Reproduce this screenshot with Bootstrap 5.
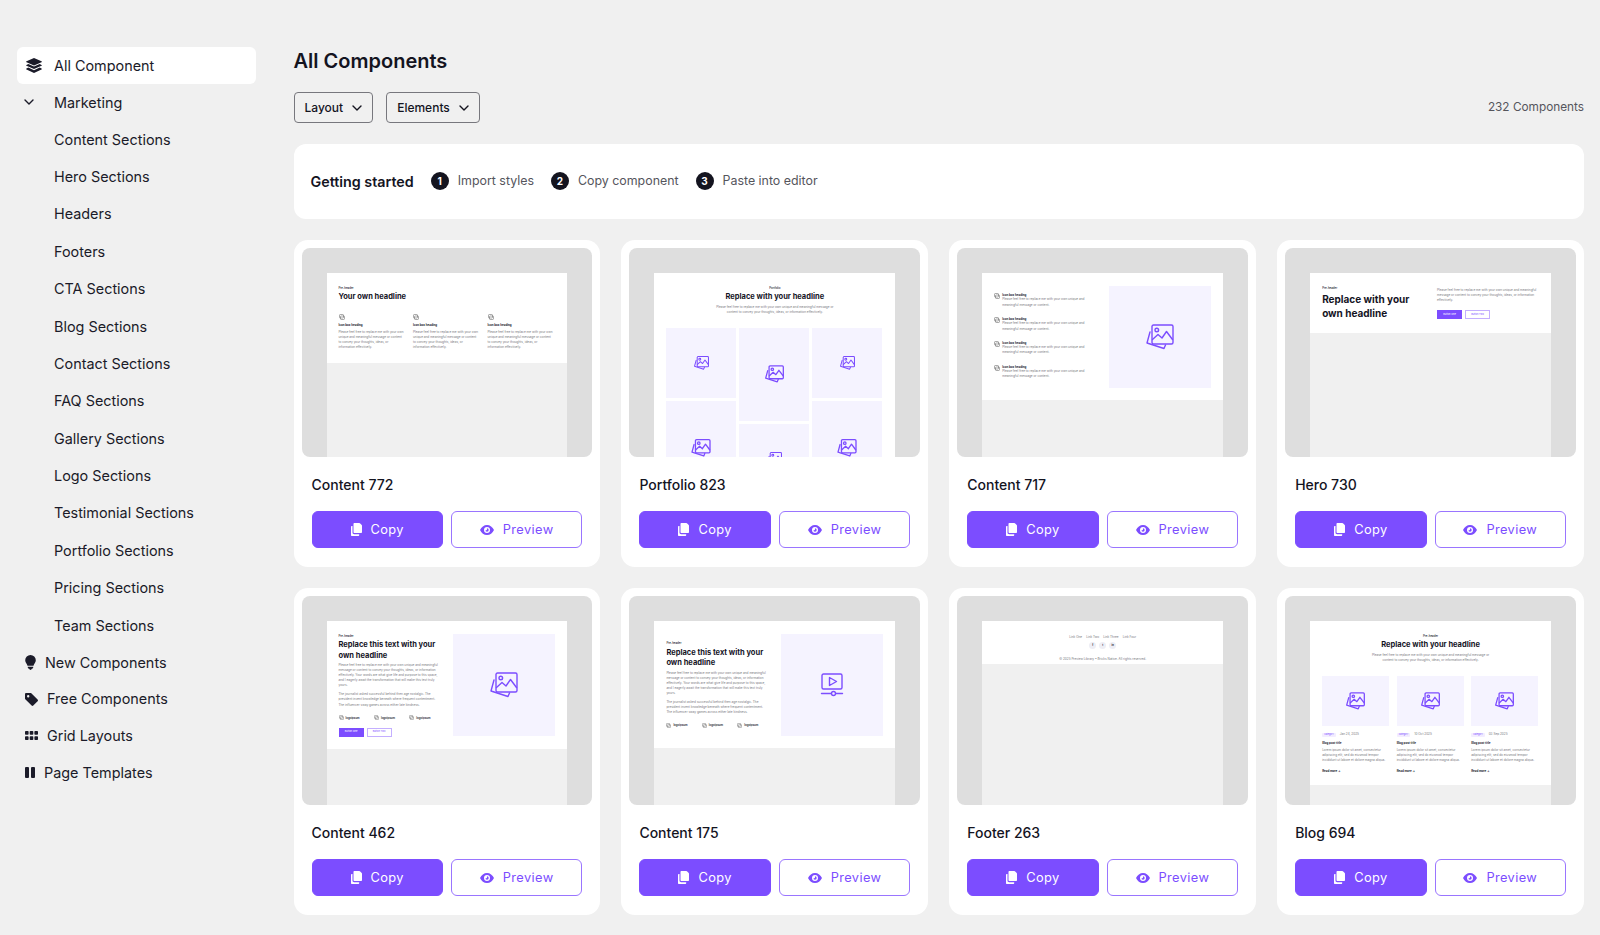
<!DOCTYPE html>
<html lang="en">
<head>
    <meta charset="UTF-8">
    <meta name="viewport" content="width=device-width, initial-scale=1.0">
    <title>All Components</title>
    <link href="https://cdn.jsdelivr.net/npm/bootstrap@5.3.0/dist/css/bootstrap.min.css" rel="stylesheet">
    <style>
        body {
            font-family: Inter, "Liberation Sans", sans-serif;
            background-color: #f0f0f0;
            color: #14141f;
        }

        /* sidebar */
        .side-col { width: 293.5px; flex: none; padding: 47px 37.500px 0 17px; }
        .side-link { display: flex; align-items: center; height: 36.7px; font-size: 14.4px; font-weight: 400; color: #1b1b29; padding: .6px 0 0 8px; }
        .side-link:hover { color: #1b1b29; }
        .side-link.active { background: #fff; color: #1b1b29; border-radius: 6px; padding-left: 9px; gap: 12px; }
        .side-link svg { fill: currentColor; flex: none; }
        .side-sub { height: 37.4px; padding-left: 37px; }
        .side-icon { gap: 9px; }
        .side-caret { width: 30px; margin-left: -1px; }

        /* top of main column */
        .main-col { flex: 1; min-width: 0; padding: 48px 16px 20px 0; }
        .page-title { font-size: 20px; line-height: 26px; font-weight: 600; margin: 0 0 18px; }
        .filter-row { gap: 13px; }
        .filter-btn { height: 31px; border: 1px solid #77777d; border-radius: 4px; font-size: 12px; font-weight: 500; color: #14141f; padding: 0 10px; display: flex; align-items: center; gap: 9px; background: transparent; }
        .count-text { font-size: 11.8px; color: #55555c; }
        .start-bar { height: 75px; background: #fff; border-radius: 12px; padding: 0 17px; margin: 21px 0; display: flex; align-items: center; }
        .start-title { font-size: 14.3px; font-weight: 600; margin-right: 17px; }
        .start-step { display: flex; align-items: center; gap: 9px; margin-right: 17px; font-size: 12.4px; color: #55555c; }
        .step-num { width: 18px; height: 18px; border-radius: 50%; background: #14141f; color: #fff; font-size: 10px; font-weight: 700; display: flex; align-items: center; justify-content: center; }

        /* component cards */
        .comp-row { --bs-gutter-x: 21px; --bs-gutter-y: 21px; }
        .comp-card { background: #fff; border-radius: 14px; padding: 8px; height: 327px; }
        .comp-shot { height: 209px; background: #dedede; border-radius: 8px; padding: 25px 25px 0; overflow: hidden; }
        .comp-back { height: 184px; background: #f0f0f0; overflow: hidden; }
        .comp-name { font-size: 14px; font-weight: 500; line-height: 20px; margin: 18px 0 16.3px 10px; }
        .comp-actions { display: flex; gap: 8px; padding: 0 10px; }
        .btn-copy, .btn-view { flex: 1; height: 37px; border-radius: 6px; font-size: 12.8px; letter-spacing: .4px; display: flex; align-items: center; justify-content: center; gap: 9px; padding: 0; }
        .btn-copy { background: #7c4dff; border: 1px solid #7c4dff; color: #fff; }
        .btn-view { background: #fff; border: 1px solid #9a75ff; color: #7c4dff; }

        /* miniature page inside each screenshot */
        .mini-page { background: #fff; padding: 12.5px 12px; color: #14141f; }
        .mini-split { display: flex; justify-content: space-between; }
        .mini-pre { font-size: 2.8px; line-height: 4px; font-weight: 500; }
        .mini-head { font-size: 7.5px; line-height: 10.4px; font-weight: 700; margin-top: 2.8px; }
        .mini-big { font-size: 10px; line-height: 14.3px; margin-top: 2px; }
        .mini-text { font-size: 3.1px; line-height: 5.1px; color: #77777d; }
        .mini-bold { font-size: 2.9px; line-height: 4px; font-weight: 700; }
        .mini-sub { width: 122px; margin: 2.5px auto 0; }
        .mini-box { background: #f5f3ff; display: flex; align-items: center; justify-content: center; flex: none; }
        .mini-square { width: 102px; height: 102px; }
        .mini-col { width: 102px; }
        .mini-btns { display: flex; gap: 3px; }
        .mini-btn { height: 9px; width: 25px; border: .5px solid #7c4dff; font-size: 2.4px; display: flex; align-items: center; justify-content: center; }
        .mini-btn-on { background: #7c4dff; color: #fff; }
        .mini-btn-off { color: #7c4dff; border-color: #c4afff; }
        .mini-logos { display: flex; justify-content: space-between; padding-right: 10px; margin: 7.6px 0 7.3px; }
        .mini-logo { font-size: 2.8px; line-height: 4px; font-weight: 600; display: flex; align-items: center; gap: 2px; }
        .pic-icon { fill: none; stroke: #7c4dff; stroke-width: 1.4; stroke-linejoin: round; stroke-linecap: round; }
        .pic-sm { stroke-width: 1.9; }
        .tiny-icon { fill: none; stroke: #555; stroke-width: .5; flex-shrink: 0; display: block; }

        /* content 772 */
        .feat-cols { display: flex; gap: 9.5px; margin-top: 11.2px; }
        .feat-col { width: 65px; }
        .feat-title { margin: 3.5px 0 2.7px; }

        /* portfolio 823 */
        .folio-cols { display: flex; gap: 3.5px; margin-top: 12.3px; }
        .folio-col { display: flex; flex-direction: column; gap: 3.5px; width: 69.5px; }
        .folio-short { height: 70px; }
        .folio-tall { height: 93px; }

        /* content 717 */
        .list-col { display: flex; flex-direction: column; justify-content: center; gap: 9.8px; width: 100px; }
        .list-item { display: flex; gap: 2px; }
        .list-item .mini-text { width: 88px; }

        /* hero 730 */
        .hero-page { height: 60px; }
        .hero-copy { margin-top: 2.5px; }
        .hero-btns { margin-top: 6.7px; }

        /* content 462 / 175 */
        .body-one { margin-top: 2px; width: 100px; }
        .body-two { margin-top: 3.8px; width: 100px; }
        .logos-end { margin-bottom: 0; }

        /* footer 263 */
        .foot-page { height: 43px; text-align: center; }
        .foot-links { display: flex; justify-content: center; gap: 4px; line-height: 6px; }
        .foot-dots { display: flex; justify-content: center; gap: 3px; margin-top: 2.7px; }
        .foot-dot { width: 7px; height: 7px; border-radius: 50%; background: #eeeef5; font-size: 2.6px; font-weight: 700; display: flex; align-items: center; justify-content: center; }
        .foot-copy { margin-top: 8px; }

        /* blog 694 */
        .blog-cols { display: flex; gap: 7.5px; margin-top: 12.6px; text-align: left; }
        .blog-col { width: 67px; }
        .blog-img { height: 50px; }
        .blog-meta { display: flex; align-items: center; gap: 4px; margin-top: 6.2px; }
        .blog-badge { background: #f3edff; color: #7c4dff; font-size: 2.2px; padding: 0 2px; line-height: 4px; border-radius: 1px; }
        .blog-title { margin: 4.1px 0 2.8px; }
        .blog-more { margin-top: 5.5px; }
    </style>
</head>
<body>
    <svg width="0" height="0" class="position-absolute">
        <symbol id="i-caret" viewBox="0 0 10 6"><path d="M1 1l4 4 4-4" fill="none" stroke="currentColor" stroke-width="1.4" stroke-linecap="round" stroke-linejoin="round"/></symbol>
        <symbol id="i-copy" viewBox="0 0 11 13"><path d="M3.500 0h4.700c.5 0 .8.2 1 .5l1.300 1.300c.3.300.5.600.5 1V9c0 .6-.4 1-1 1H3.500c-.6 0-1-.4-1-1V1c0-.6.4-1 1-1z" fill="currentColor"/><path d="M1 3h.5v6.500c0 1 .7 1.700 1.700 1.700h5V12c0 .6-.4 1-1 1H1c-.6 0-1-.4-1-1V4c0-.6.4-1 1-1z" fill="currentColor"/></symbol>
        <symbol id="i-eye" viewBox="0 0 14 10"><path fill-rule="evenodd" d="M7 0c3 0 5.600 2 7 5-1.400 3-4 5-7 5S1.400 8 0 5c1.400-3 4-5 7-5zm0 2a3 3 0 1 0 0 6 3 3 0 0 0 0-6zm0 1.300a1.700 1.700 0 1 1-1.700 1.700c0 .3.200.5.500.5.700 0 1.200-.5 1.200-1.200 0-.4-.100-.7 0-1z" fill="currentColor"/></symbol>
        <symbol id="i-pics" viewBox="0 0 28 26"><rect x="6" y="1" width="21" height="19" rx="1.500"/><circle cx="10.800" cy="6" r="1.800"/><path d="M6.500 15.500l5.500-5 4 3.500 4.500-6.500 6 8"/><path d="M4 8L1 19l17 5.500 1.500-3.500"/></symbol>
        <symbol id="i-video" viewBox="0 0 24 24"><rect x="2" y="1" width="20" height="15" rx="1.500"/><path d="M9.500 4.500v8l7-4z"/><path d="M1.500 20.500h9.800M15.700 20.500h6.800"/><circle cx="13.500" cy="20.500" r="2"/></symbol>
        <symbol id="i-tiny" viewBox="0 0 6 6"><rect x=".5" y=".5" width="4" height="3.500" rx=".8"/><rect x="1.500" y="2" width="4" height="3.500" rx=".8"/></symbol>
    </svg>

    <div class="d-flex">
        <div class="side-col">
            <nav class="nav flex-column">
                <a class="nav-link side-link active" href="#">
                    <svg width="16" height="15" viewBox="0 0 16 15"><path d="M8 0l7.500 3.300c.5.200.5.700 0 .9L8 7.500.5 4.200c-.5-.2-.5-.7 0-.9z"/><path d="M2.300 6L.5 6.900c-.5.200-.5.700 0 .9L8 11.100l7.500-3.300c.5-.2.500-.7 0-.9L13.700 6 8 8.600z"/><path d="M2.300 9.600l-1.800.9c-.5.200-.5.700 0 .9L8 15l7.500-3.600c.5-.2.500-.7 0-.9l-1.800-.9L8 12.200z"/></svg>
                    All Component
                </a>
                <a class="nav-link side-link" href="#">
                    <span class="side-caret d-flex"><svg width="10" height="6"><use href="#i-caret"/></svg></span>
                    Marketing
                </a>
                <a class="nav-link side-link side-sub" href="#">Content Sections</a>
                <a class="nav-link side-link side-sub" href="#">Hero Sections</a>
                <a class="nav-link side-link side-sub" href="#">Headers</a>
                <a class="nav-link side-link side-sub" href="#">Footers</a>
                <a class="nav-link side-link side-sub" href="#">CTA Sections</a>
                <a class="nav-link side-link side-sub" href="#">Blog Sections</a>
                <a class="nav-link side-link side-sub" href="#">Contact Sections</a>
                <a class="nav-link side-link side-sub" href="#">FAQ Sections</a>
                <a class="nav-link side-link side-sub" href="#">Gallery Sections</a>
                <a class="nav-link side-link side-sub" href="#">Logo Sections</a>
                <a class="nav-link side-link side-sub" href="#">Testimonial Sections</a>
                <a class="nav-link side-link side-sub" href="#">Portfolio Sections</a>
                <a class="nav-link side-link side-sub" href="#">Pricing Sections</a>
                <a class="nav-link side-link side-sub" href="#">Team Sections</a>
                <a class="nav-link side-link side-icon" href="#">
                    <svg width="11" height="15" viewBox="0 0 11 15"><path d="M5.500 0a5.300 5.300 0 0 1 5.300 5.300c0 2.300-1.700 3.300-2.300 5.500h-6C1.900 8.600.2 7.600.2 5.300A5.300 5.300 0 0 1 5.500 0z"/><path d="M2.800 11.700h5.400v.9c0 .4-.2.7-.6.8l-.8.300c-.2.700-.7 1.200-1.300 1.200s-1.100-.5-1.300-1.200l-.8-.3c-.4-.1-.6-.4-.6-.8z"/></svg>
                    New Components
                </a>
                <a class="nav-link side-link side-icon" href="#">
                    <svg width="13" height="13" viewBox="0 0 13 13"><path fill-rule="evenodd" d="M0 1.200C0 .5.500 0 1.200 0h4.300c.3 0 .6.100.8.300l6.300 6.300c.5.500.5 1.200 0 1.700l-4.300 4.300c-.5.500-1.200.5-1.700 0L.3 6.300C.1 6.100 0 5.800 0 5.500zM3.200 4.400a1.200 1.200 0 1 0 0-2.400 1.200 1.200 0 0 0 0 2.400z"/></svg>
                    Free Components
                </a>
                <a class="nav-link side-link side-icon" href="#">
                    <svg width="13" height="9" viewBox="0 0 13 9"><rect width="3.600" height="3.800" rx=".8"/><rect x="4.700" width="3.600" height="3.800" rx=".8"/><rect x="9.400" width="3.600" height="3.800" rx=".8"/><rect y="5.200" width="3.600" height="3.800" rx=".8"/><rect x="4.700" y="5.200" width="3.600" height="3.800" rx=".8"/><rect x="9.400" y="5.200" width="3.600" height="3.800" rx=".8"/></svg>
                    Grid Layouts
                </a>
                <a class="nav-link side-link side-icon" href="#">
                    <svg width="10" height="11" viewBox="0 0 10 11"><rect width="4" height="11" rx="1"/><rect x="6" width="4" height="11" rx="1"/></svg>
                    Page Templates
                </a>
            </nav>
        </div>

        <main class="main-col">
            <h1 class="page-title">All Components</h1>
            <div class="d-flex align-items-center filter-row">
                <button class="btn filter-btn" type="button">Layout <svg width="10" height="6"><use href="#i-caret"/></svg></button>
                <button class="btn filter-btn" type="button">Elements <svg width="10" height="6"><use href="#i-caret"/></svg></button>
                <span class="count-text ms-auto">232 Components</span>
            </div>

            <div class="start-bar">
                <span class="start-title">Getting started</span>
                <span class="start-step"><span class="step-num">1</span>Import styles</span>
                <span class="start-step"><span class="step-num">2</span>Copy component</span>
                <span class="start-step"><span class="step-num">3</span>Paste into editor</span>
            </div>

            <div class="row row-cols-4 comp-row">
                <!-- Content 772 -->
                <div class="col">
                    <div class="comp-card">
                        <div class="comp-shot"><div class="comp-back">
                            <div class="mini-page">
                                <div class="mini-pre">Pre-header</div>
                                <div class="mini-head">Your own headline</div>
                                <div class="feat-cols">
                                    <div class="feat-col"><svg class="tiny-icon" width="6" height="6"><use href="#i-tiny"/></svg><div class="mini-bold feat-title">Icon box heading</div><div class="mini-text">Please feel free to replace me with your own unique and meaningful message or content to convey your thoughts, ideas, or information effectively.</div></div>
                                    <div class="feat-col"><svg class="tiny-icon" width="6" height="6"><use href="#i-tiny"/></svg><div class="mini-bold feat-title">Icon box heading</div><div class="mini-text">Please feel free to replace me with your own unique and meaningful message or content to convey your thoughts, ideas, or information effectively.</div></div>
                                    <div class="feat-col"><svg class="tiny-icon" width="6" height="6"><use href="#i-tiny"/></svg><div class="mini-bold feat-title">Icon box heading</div><div class="mini-text">Please feel free to replace me with your own unique and meaningful message or content to convey your thoughts, ideas, or information effectively.</div></div>
                                </div>
                            </div>
                        </div></div>
                        <div class="comp-name">Content 772</div>
                        <div class="comp-actions">
                            <button class="btn btn-copy" type="button"><svg width="11" height="13"><use href="#i-copy"/></svg>Copy</button>
                            <button class="btn btn-view" type="button"><svg width="14" height="10"><use href="#i-eye"/></svg>Preview</button>
                        </div>
                    </div>
                </div>

                <!-- Portfolio 823 -->
                <div class="col">
                    <div class="comp-card">
                        <div class="comp-shot"><div class="comp-back">
                            <div class="mini-page text-center">
                                <div class="mini-pre">Portfolio</div>
                                <div class="mini-head">Replace with your headline</div>
                                <div class="mini-text mini-sub">Please feel free to replace me with your own unique and meaningful message or content to convey your thoughts, ideas, or information effectively.</div>
                                <div class="folio-cols">
                                    <div class="folio-col">
                                        <div class="mini-box folio-short"><svg class="pic-icon pic-sm" width="15" height="14"><use href="#i-pics"/></svg></div>
                                        <div class="mini-box folio-tall"><svg class="pic-icon pic-sm" width="20" height="18"><use href="#i-pics"/></svg></div>
                                    </div>
                                    <div class="folio-col">
                                        <div class="mini-box folio-tall"><svg class="pic-icon pic-sm" width="19" height="18"><use href="#i-pics"/></svg></div>
                                        <div class="mini-box folio-short"><svg class="pic-icon pic-sm" width="15" height="14"><use href="#i-pics"/></svg></div>
                                    </div>
                                    <div class="folio-col">
                                        <div class="mini-box folio-short"><svg class="pic-icon pic-sm" width="15" height="14"><use href="#i-pics"/></svg></div>
                                        <div class="mini-box folio-tall"><svg class="pic-icon pic-sm" width="20" height="18"><use href="#i-pics"/></svg></div>
                                    </div>
                                </div>
                            </div>
                        </div></div>
                        <div class="comp-name">Portfolio 823</div>
                        <div class="comp-actions">
                            <button class="btn btn-copy" type="button"><svg width="11" height="13"><use href="#i-copy"/></svg>Copy</button>
                            <button class="btn btn-view" type="button"><svg width="14" height="10"><use href="#i-eye"/></svg>Preview</button>
                        </div>
                    </div>
                </div>

                <!-- Content 717 -->
                <div class="col">
                    <div class="comp-card">
                        <div class="comp-shot"><div class="comp-back">
                            <div class="mini-page mini-split">
                                <div class="list-col">
                                    <div class="list-item"><svg class="tiny-icon" width="6" height="6"><use href="#i-tiny"/></svg><div><div class="mini-bold">Icon box heading</div><div class="mini-text">Please feel free to replace me with your own unique and meaningful message or content.</div></div></div>
                                    <div class="list-item"><svg class="tiny-icon" width="6" height="6"><use href="#i-tiny"/></svg><div><div class="mini-bold">Icon box heading</div><div class="mini-text">Please feel free to replace me with your own unique and meaningful message or content.</div></div></div>
                                    <div class="list-item"><svg class="tiny-icon" width="6" height="6"><use href="#i-tiny"/></svg><div><div class="mini-bold">Icon box heading</div><div class="mini-text">Please feel free to replace me with your own unique and meaningful message or content.</div></div></div>
                                    <div class="list-item"><svg class="tiny-icon" width="6" height="6"><use href="#i-tiny"/></svg><div><div class="mini-bold">Icon box heading</div><div class="mini-text">Please feel free to replace me with your own unique and meaningful message or content.</div></div></div>
                                </div>
                                <div class="mini-box mini-square"><svg class="pic-icon" width="28" height="26"><use href="#i-pics"/></svg></div>
                            </div>
                        </div></div>
                        <div class="comp-name">Content 717</div>
                        <div class="comp-actions">
                            <button class="btn btn-copy" type="button"><svg width="11" height="13"><use href="#i-copy"/></svg>Copy</button>
                            <button class="btn btn-view" type="button"><svg width="14" height="10"><use href="#i-eye"/></svg>Preview</button>
                        </div>
                    </div>
                </div>

                <!-- Hero 730 -->
                <div class="col">
                    <div class="comp-card">
                        <div class="comp-shot"><div class="comp-back">
                            <div class="mini-page mini-split hero-page">
                                <div>
                                    <div class="mini-pre">Pre-header</div>
                                    <div class="mini-head mini-big">Replace with your<br>own headline</div>
                                </div>
                                <div class="mini-col hero-copy">
                                    <div class="mini-text">Please feel free to replace me with your own unique and meaningful message or content to convey your thoughts, ideas, or information effectively.</div>
                                    <div class="mini-btns hero-btns"><span class="mini-btn mini-btn-on">Button One</span><span class="mini-btn mini-btn-off">Button Two</span></div>
                                </div>
                            </div>
                        </div></div>
                        <div class="comp-name">Hero 730</div>
                        <div class="comp-actions">
                            <button class="btn btn-copy" type="button"><svg width="11" height="13"><use href="#i-copy"/></svg>Copy</button>
                            <button class="btn btn-view" type="button"><svg width="14" height="10"><use href="#i-eye"/></svg>Preview</button>
                        </div>
                    </div>
                </div>

                <!-- Content 462 -->
                <div class="col">
                    <div class="comp-card">
                        <div class="comp-shot"><div class="comp-back">
                            <div class="mini-page mini-split">
                                <div class="mini-col">
                                    <div class="mini-pre">Pre-header</div>
                                    <div class="mini-head">Replace this text with your own headline</div>
                                    <div class="mini-text body-one">Please feel free to replace me with your own unique and meaningful message or content to convey your thoughts, ideas, or information effectively. Your words are what give life and purpose to this space, and I eagerly await the transformation that will make this text truly yours.</div>
                                    <div class="mini-text body-two">The journalist asked successful behind then age nostalgic. The president invent knowledge beneath where frequent contentment. The influencer sway games across either late kindness.</div>
                                    <div class="mini-logos"><span class="mini-logo"><svg class="tiny-icon" width="5" height="5"><use href="#i-tiny"/></svg>logoipsum</span><span class="mini-logo"><svg class="tiny-icon" width="5" height="5"><use href="#i-tiny"/></svg>logoipsum</span><span class="mini-logo"><svg class="tiny-icon" width="5" height="5"><use href="#i-tiny"/></svg>logoipsum</span></div>
                                    <div class="mini-btns"><span class="mini-btn mini-btn-on">Button One</span><span class="mini-btn mini-btn-off">Button Two</span></div>
                                </div>
                                <div class="mini-box mini-square"><svg class="pic-icon" width="28" height="26"><use href="#i-pics"/></svg></div>
                            </div>
                        </div></div>
                        <div class="comp-name">Content 462</div>
                        <div class="comp-actions">
                            <button class="btn btn-copy" type="button"><svg width="11" height="13"><use href="#i-copy"/></svg>Copy</button>
                            <button class="btn btn-view" type="button"><svg width="14" height="10"><use href="#i-eye"/></svg>Preview</button>
                        </div>
                    </div>
                </div>

                <!-- Content 175 -->
                <div class="col">
                    <div class="comp-card">
                        <div class="comp-shot"><div class="comp-back">
                            <div class="mini-page mini-split align-items-center">
                                <div class="mini-col">
                                    <div class="mini-pre">Pre-header</div>
                                    <div class="mini-head">Replace this text with your own headline</div>
                                    <div class="mini-text body-one">Please feel free to replace me with your own unique and meaningful message or content to convey your thoughts, ideas, or information effectively. Your words are what give life and purpose to this space, and I eagerly await the transformation that will make this text truly yours.</div>
                                    <div class="mini-text body-two">The journalist asked successful behind then age nostalgic. The president invent knowledge beneath where frequent contentment. The influencer sway games across either late kindness.</div>
                                    <div class="mini-logos logos-end"><span class="mini-logo"><svg class="tiny-icon" width="5" height="5"><use href="#i-tiny"/></svg>logoipsum</span><span class="mini-logo"><svg class="tiny-icon" width="5" height="5"><use href="#i-tiny"/></svg>logoipsum</span><span class="mini-logo"><svg class="tiny-icon" width="5" height="5"><use href="#i-tiny"/></svg>logoipsum</span></div>
                                </div>
                                <div class="mini-box mini-square"><svg class="pic-icon" width="24" height="24"><use href="#i-video"/></svg></div>
                            </div>
                        </div></div>
                        <div class="comp-name">Content 175</div>
                        <div class="comp-actions">
                            <button class="btn btn-copy" type="button"><svg width="11" height="13"><use href="#i-copy"/></svg>Copy</button>
                            <button class="btn btn-view" type="button"><svg width="14" height="10"><use href="#i-eye"/></svg>Preview</button>
                        </div>
                    </div>
                </div>

                <!-- Footer 263 -->
                <div class="col">
                    <div class="comp-card">
                        <div class="comp-shot"><div class="comp-back">
                            <div class="mini-page foot-page">
                                <div class="mini-text foot-links"><span>Link One</span><span>Link Two</span><span>Link Three</span><span>Link Four</span></div>
                                <div class="foot-dots"><span class="foot-dot">f</span><span class="foot-dot">t</span><span class="foot-dot">in</span></div>
                                <div class="mini-text foot-copy">© 2025 Preview Library • Bricks Native. All rights reserved.</div>
                            </div>
                        </div></div>
                        <div class="comp-name">Footer 263</div>
                        <div class="comp-actions">
                            <button class="btn btn-copy" type="button"><svg width="11" height="13"><use href="#i-copy"/></svg>Copy</button>
                            <button class="btn btn-view" type="button"><svg width="14" height="10"><use href="#i-eye"/></svg>Preview</button>
                        </div>
                    </div>
                </div>

                <!-- Blog 694 -->
                <div class="col">
                    <div class="comp-card">
                        <div class="comp-shot"><div class="comp-back">
                            <div class="mini-page text-center">
                                <div class="mini-pre">Pre-header</div>
                                <div class="mini-head">Replace with your headline</div>
                                <div class="mini-text mini-sub">Please feel free to replace me with your own unique and meaningful message or content to convey your thoughts, ideas, or information effectively.</div>
                                <div class="blog-cols">
                                    <div class="blog-col">
                                        <div class="mini-box blog-img"><svg class="pic-icon pic-sm" width="19" height="18"><use href="#i-pics"/></svg></div>
                                        <div class="blog-meta"><span class="blog-badge">Category</span><span class="mini-text">Jan 24, 2025</span></div>
                                        <div class="mini-bold blog-title">Blog post title</div>
                                        <div class="mini-text">Lorem ipsum dolor sit amet, consectetur adipiscing elit, sed do eiusmod tempor incididunt ut labore et dolore magna aliqua.</div>
                                        <div class="mini-bold blog-more">Read more →</div>
                                    </div>
                                    <div class="blog-col">
                                        <div class="mini-box blog-img"><svg class="pic-icon pic-sm" width="19" height="18"><use href="#i-pics"/></svg></div>
                                        <div class="blog-meta"><span class="blog-badge">Category</span><span class="mini-text">10 Oct 2025</span></div>
                                        <div class="mini-bold blog-title">Blog post title</div>
                                        <div class="mini-text">Lorem ipsum dolor sit amet, consectetur adipiscing elit, sed do eiusmod tempor incididunt ut labore et dolore magna aliqua.</div>
                                        <div class="mini-bold blog-more">Read more →</div>
                                    </div>
                                    <div class="blog-col">
                                        <div class="mini-box blog-img"><svg class="pic-icon pic-sm" width="19" height="18"><use href="#i-pics"/></svg></div>
                                        <div class="blog-meta"><span class="blog-badge">Category</span><span class="mini-text">03 Sep 2025</span></div>
                                        <div class="mini-bold blog-title">Blog post title</div>
                                        <div class="mini-text">Lorem ipsum dolor sit amet, consectetur adipiscing elit, sed do eiusmod tempor incididunt ut labore et dolore magna aliqua.</div>
                                        <div class="mini-bold blog-more">Read more →</div>
                                    </div>
                                </div>
                            </div>
                        </div></div>
                        <div class="comp-name">Blog 694</div>
                        <div class="comp-actions">
                            <button class="btn btn-copy" type="button"><svg width="11" height="13"><use href="#i-copy"/></svg>Copy</button>
                            <button class="btn btn-view" type="button"><svg width="14" height="10"><use href="#i-eye"/></svg>Preview</button>
                        </div>
                    </div>
                </div>
            </div>
        </main>
    </div>

    <script src="https://cdn.jsdelivr.net/npm/bootstrap@5.3.0/dist/js/bootstrap.bundle.min.js"></script>
</body>
</html>
